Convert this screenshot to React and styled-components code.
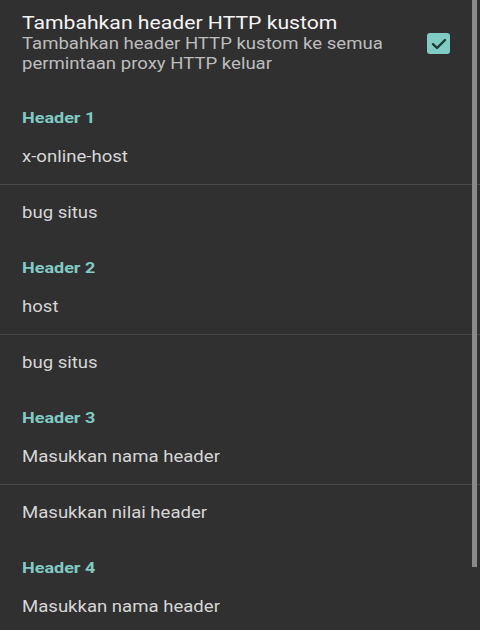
import React from "react";
import styled, { createGlobalStyle } from "styled-components";

const GlobalStyle = createGlobalStyle`
  html, body {
    margin: 0;
    padding: 0;
    background: #303030;
  }
  body {
    font-family: Roboto, "Noto Sans", sans-serif;
  }
`;

const groups = [
  { title: "Header 1", name: "x-online-host", value: "bug situs" },
  { title: "Header 2", name: "host", value: "bug situs" },
  { title: "Header 3", name: "Masukkan nama header", value: "Masukkan nilai header" },
  { title: "Header 4", name: "Masukkan nama header", value: "Masukkan nilai header" },
];

const App = () => {
  return (
    <Screen>
      <GlobalStyle />
      <SwitchRow>
        <SwitchText>
          <Title>Tambahkan header HTTP kustom</Title>
          <Summary>
            Tambahkan header HTTP kustom ke semua permintaan proxy HTTP keluar
          </Summary>
        </SwitchText>
        <CheckBox>
          <svg width="16" height="12" viewBox="0 0 16 12">
            <path
              d="M2 6.2 L6 10 L14 2"
              fill="none"
              stroke="#1e3836"
              strokeWidth="2.4"
              strokeLinecap="round"
              strokeLinejoin="round"
            />
          </svg>
        </CheckBox>
      </SwitchRow>

      {groups.map((g) => (
        <Group key={g.title}>
          <CategoryRow>
            <CategoryText>{g.title}</CategoryText>
          </CategoryRow>
          <FieldRow>
            <FieldText>{g.name}</FieldText>
          </FieldRow>
          <Divider />
          <FieldRow $short>
            <FieldText>{g.value}</FieldText>
          </FieldRow>
        </Group>
      ))}

      <ScrollThumb />
    </Screen>
  );
};

export default App;

const Screen = styled.div`
  position: relative;
  width: 480px;
  height: 630px;
  overflow: hidden;
  background: #303030;
`;

const SwitchRow = styled.div`
  display: flex;
  align-items: center;
  padding: 12px 30px 17px 22px;
  height: 61px;
`;

const SwitchText = styled.div`
  flex: 1;
  display: flex;
  flex-direction: column;
  align-items: flex-start;
`;

const Title = styled.div`
  color: #f4f4f4;
  font-size: 17.5px;
  line-height: 22px;
  white-space: nowrap;
  transform: scaleX(1.21);
  transform-origin: left center;
`;

const Summary = styled.div`
  color: #bdbdbd;
  font-size: 16px;
  line-height: 19.5px;
  width: 330px;
  transform: scaleX(1.16);
  transform-origin: left center;
`;

const CheckBox = styled.div`
  width: 23px;
  height: 21px;
  border-radius: 3px;
  background: #80cbc4;
  display: flex;
  align-items: center;
  justify-content: center;
  margin-top: 2px;
`;

const Group = styled.div`
  display: flex;
  flex-direction: column;
`;

const CategoryRow = styled.div`
  display: flex;
  padding: 18px 22px 0;
  height: 20px;
  align-items: center;
`;

const CategoryText = styled.span`
  font-size: 15.5px;
  font-weight: 700;
  color: #80cbc4;
  white-space: nowrap;
  transform: scaleX(1.16);
  transform-origin: left center;
`;

const FieldRow = styled.div`
  display: flex;
  align-items: center;
  padding: 0 22px;
  height: ${(p) => (p.$short ? "55px" : "56px")};
`;

const FieldText = styled.span`
  font-size: 16px;
  color: #d6d6d6;
  white-space: nowrap;
  transform: scaleX(1.16);
  transform-origin: left center;
`;

const Divider = styled.div`
  height: 1px;
  background: #4a4a4a;
`;

const ScrollThumb = styled.div`
  position: absolute;
  top: 0;
  right: 3px;
  width: 5px;
  height: 567px;
  background: #8a8a8a;
`;
